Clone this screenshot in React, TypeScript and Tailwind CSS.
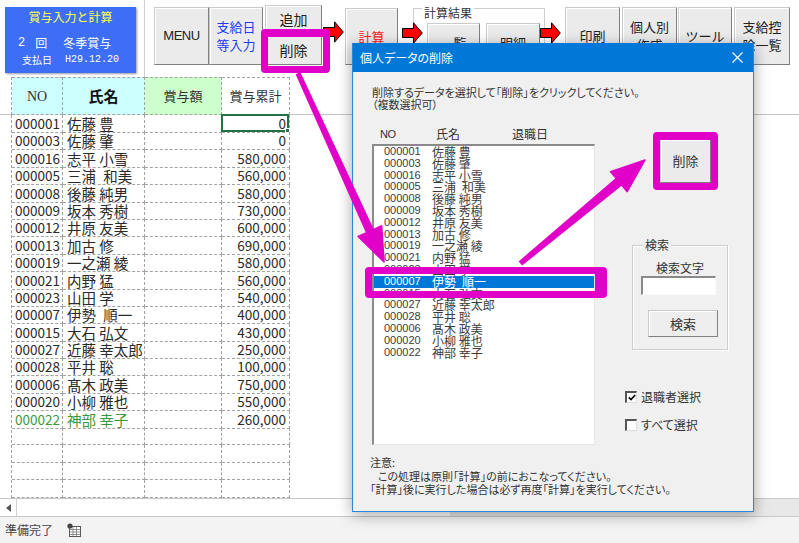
import React from 'react';

const rows: [string, string, string][] = [
  ['000001', '佐藤 豊', '0'],
  ['000003', '佐藤 肇', '0'],
  ['000016', '志平 小雪', '580,000'],
  ['000005', '三浦\u2002和美', '560,000'],
  ['000008', '後藤 純男', '580,000'],
  ['000009', '坂本 秀樹', '730,000'],
  ['000012', '井原 友美', '600,000'],
  ['000013', '加古 修', '690,000'],
  ['000019', '一之瀬 綾', '580,000'],
  ['000021', '内野 猛', '560,000'],
  ['000023', '山田 学', '540,000'],
  ['000007', '伊勢\u2002順一', '400,000'],
  ['000015', '大石 弘文', '430,000'],
  ['000027', '近藤 幸太郎', '250,000'],
  ['000028', '平井 聡', '100,000'],
  ['000006', '髙木 政美', '750,000'],
  ['000020', '小柳 雅也', '550,000'],
  ['000022', '神部 幸子', '260,000'],
];

const btn =
  'flex items-center justify-center text-center bg-[#ebebeb] border border-[#cacaca] border-r-[#808080] border-b-[#808080] shadow-[inset_1px_1px_0_#ffffff] text-[13px] leading-[18px]';

const cell = 'border-r border-b border-dashed border-[#a3a3a3]';

function RedArrow({ className }: { className: string }) {
  return (
    <svg className={`absolute ${className}`} width="21" height="22" viewBox="0 0 21 22">
      <path d="M0.5 6.5H11.5V0.8L20.3 11L11.5 21.2V15.5H0.5Z" fill="#ff0000" stroke="#000" strokeWidth="1" />
    </svg>
  );
}

function Toolbar() {
  return (
    <div className="flex h-[77px] shrink-0 items-start">
      {/* 賞与入力と計算 panel */}
      <div className="ml-[5px] mt-[7px] flex h-[66px] w-[131px] flex-col bg-[#3d6ef5] text-white shadow-[1px_1px_2px_rgba(0,0,0,0.4)]">
        <div className="mt-[2px] text-center text-[12px] leading-[16px] text-[#ffff4a]">賞与入力と計算</div>
        <div className="mt-[11px] flex text-[12px] leading-[14px]">
          <span className="ml-[13px] font-['Liberation_Mono',monospace]">2</span>
          <span className="ml-[10px]">回</span>
          <span className="ml-[16px]">冬季賞与</span>
        </div>
        <div className="mt-[3px] flex items-center leading-[14px]">
          <span className="ml-[17px] text-[10px]">支払日</span>
          <span className="ml-[13px] font-['Liberation_Mono',monospace] text-[10px]">H29.12.20</span>
        </div>
      </div>
      <div className="ml-[8px] h-[77px] w-px bg-[#d0d0d0]" />

      <div className={`${btn} ml-[9px] mt-[7px] h-[58px] w-[55px] font-['Liberation_Sans',sans-serif] text-[12px] tracking-[-0.5px]`}>MENU</div>
      <div className={`${btn} mt-[7px] h-[58px] w-[54px] text-[#1d3cf0]`}>
        支給日
        <br />
        等入力
      </div>
      <div className="ml-[2px] flex w-[57px] flex-col">
        <div className={`${btn} mt-[5px] h-[27px] text-[14px]`}>追加</div>
        <div className={`${btn} mt-[2px] h-[31px] text-[14px]`}>削除</div>
      </div>
      <div className={`${btn} ml-[23px] mt-[8px] h-[57px] w-[53px] text-[#ff1a1a]`}>計算</div>

      <div className="relative ml-[15px] mt-[8px] h-[64px] w-[132px] border border-[#cfcfcf]">
        <span className="absolute -top-[3px] left-[8px] bg-white px-[2px] text-[12px] leading-[14px] text-[#333]">計算結果</span>
        <div className="ml-[13px] mt-[14px] flex">
          <div className={`${btn} h-[40px] w-[53px]`}>一覧</div>
          <div className={`${btn} ml-[6px] h-[40px] w-[54px]`}>明細</div>
        </div>
      </div>

      <div className={`${btn} ml-[20px] mt-[7px] h-[58px] w-[55px]`}>印刷</div>
      <div className={`${btn} ml-[2px] mt-[7px] h-[58px] w-[55px]`}>
        個人別
        <br />
        作成
      </div>
      <div className={`${btn} ml-[1px] mt-[7px] h-[58px] w-[54px]`}>ツール</div>
      <div className={`${btn} ml-[2px] mt-[7px] h-[58px] w-[56px]`}>
        支給控
        <br />
        除一覧
      </div>
    </div>
  );
}

function Sheet() {
  const empty = Array.from({ length: 4 });
  return (
    <div className="flex h-[421px] shrink-0 flex-col overflow-hidden">
      <div className="flex h-[38px] shrink-0">
        <div className="w-[11px] border-b border-[#c6c6c6]" />
        <div className="grid grid-cols-[51px_82px_77px_68px] border-l border-dashed border-[#a3a3a3] text-[13px] text-[#333]">
          <div className="flex items-center justify-center border-r border-t border-b border-dashed border-[#a3a3a3] bg-[#ccffff] font-['Liberation_Serif',serif] text-[14px]">
            NO
          </div>
          <div className="flex items-center justify-center border-r border-t border-b border-dashed border-[#a3a3a3] bg-[#ccffff] text-[15px] font-bold text-[#111]">
            氏名
          </div>
          <div className="flex items-center justify-center border-r border-t border-b border-dashed border-[#a3a3a3] bg-[#ccffcc]">
            賞与額
          </div>
          <div className="flex items-center justify-center border-r border-t border-b border-dashed border-[#a3a3a3] bg-white">
            賞与累計
          </div>
        </div>
        <div className="flex-1 border-b border-[#c6c6c6]" />
      </div>

      <div className="ml-[11px] w-[279px] border-l border-dashed border-[#a3a3a3] text-[#2a2a2a]">
        {rows.map(([no, name, amount], i) => {
          const green = i === rows.length - 1;
          return (
            <div key={no} className="grid h-[17.4px] grid-cols-[51px_82px_77px_68px] leading-[17px]">
              <div className={`${cell} pl-[3px] text-[13.5px] ${green ? 'text-[#3a9a3a]' : ''}`}>{no}</div>
              <div className={`${cell} whitespace-pre pl-[4px] text-[14.5px] ${green ? 'text-[#3a9a3a]' : ''}`}>{name}</div>
              <div className={cell} />
              <div className={`${cell} relative pr-[3px] text-right text-[13.5px]`}>
                {amount}
                {i === 0 && (
                  <div className="absolute -left-px -top-px bottom-0 right-0 border-2 border-[#217346]">
                    <div className="absolute -bottom-[3px] -right-[3px] h-[5px] w-[5px] border border-white bg-[#217346]" />
                  </div>
                )}
              </div>
            </div>
          );
        })}
        {empty.map((_, i) => (
          <div key={i} className="grid h-[17.4px] grid-cols-[51px_82px_77px_68px]">
            <div className={cell} />
            <div className={cell} />
            <div className={cell} />
            <div className={cell} />
          </div>
        ))}
      </div>
    </div>
  );
}

function Dialog() {
  return (
    <div className="absolute left-[352px] top-[43px] flex h-[469px] w-[402px] flex-col border-x border-b border-[#2b86d8] bg-[#f0f0f0] text-[#333] shadow-[0_3px_14px_rgba(0,0,0,0.35)]">
      <div className="flex h-[29px] shrink-0 items-center justify-between bg-[#0078d7] pl-[7px] pr-[10px] text-[12px] text-white [font-feature-settings:'palt']">
        <span>個人データの削除</span>
        <svg width="11" height="11" viewBox="0 0 11 11">
          <path d="M0.5 0.5L10.5 10.5M10.5 0.5L0.5 10.5" stroke="#fff" strokeWidth="1.1" />
        </svg>
      </div>

      <div className="pl-[19px] pt-[14px] text-[11px] leading-[12px] [font-feature-settings:'palt']">
        <p>削除するデータを選択して「削除」をクリックしてください。</p>
        <p>（複数選択可）</p>
      </div>

      <div className="mt-[17px] flex">
        <div className="ml-[19px] flex flex-col">
          <div className="flex h-[14px] items-center pl-[8px] text-[12px] leading-[14px]">
            <span className="w-[56px] font-['Liberation_Sans',sans-serif] text-[11px] tracking-[-0.5px]">NO</span>
            <span className="w-[76px]">氏名</span>
            <span>退職日</span>
          </div>
          <div className="mt-[3px] h-[301px] w-[223px] overflow-hidden border-b border-l-2 border-r border-t-2 border-b-[#e6e6e6] border-l-[#8a8a8a] border-r-[#e6e6e6] border-t-[#8a8a8a] bg-white text-[#3c3c3c]">
            {rows.map(([no, name], i) => (
              <div
                key={no}
                className={`flex h-[11.8px] items-center leading-[11.8px] ${i === 11 ? 'bg-[#0078d7] text-white' : ''}`}
              >
                <span className="w-[58px] pl-[10px] font-['Liberation_Sans',sans-serif] text-[11px]">{no}</span>
                <span className="whitespace-pre text-[12px]">{name}</span>
              </div>
            ))}
          </div>
        </div>

        <div className="ml-[30px] flex flex-col">
          <div className={`${btn} ml-[35px] mt-[12px] h-[44px] w-[51px] bg-[#e5e5e5] text-[12px] text-[#333]`}>削除</div>

          <div className="relative ml-[7px] mt-[62px] flex h-[105px] w-[96px] flex-col border border-[#cdcdcd] shadow-[inset_1px_1px_0_#ffffff,1px_1px_0_#ffffff]">
            <span className="absolute -top-[8px] left-[10px] bg-[#f0f0f0] px-[2px] text-[12px] leading-[14px]">検索</span>
            <div className="mt-[15px] text-center text-[12px] leading-[14px]">検索文字</div>
            <div className="ml-[8px] mt-[1px] h-[19px] w-[75px] border-b border-l-2 border-r border-t-2 border-b-[#fafafa] border-l-[#8a8a8a] border-r-[#fafafa] border-t-[#8a8a8a] bg-white" />
            <div className={`${btn} ml-[15px] mt-[15px] h-[27px] w-[70px] bg-[#eeeeee] text-[12px] text-[#333]`}>検索</div>
          </div>

          <div className="mt-[41px] flex h-[12px] items-center text-[12px] leading-[14px]">
            <div className="flex h-[12px] w-[12px] items-center justify-center border-b border-l-2 border-r border-t-2 border-b-[#ddd] border-l-[#555] border-r-[#ddd] border-t-[#555] bg-white">
              <svg width="8" height="7" viewBox="0 0 8 7">
                <path d="M0.8 3.4L3 5.6L7.2 1" stroke="#000" strokeWidth="1.6" fill="none" />
              </svg>
            </div>
            <span className="ml-[4px]">退職者選択</span>
          </div>
          <div className="mt-[16px] flex h-[12px] items-center text-[12px] leading-[14px] [font-feature-settings:'palt']">
            <div className="h-[12px] w-[12px] border-b border-l-2 border-r border-t-2 border-b-[#ddd] border-l-[#555] border-r-[#ddd] border-t-[#555] bg-white" />
            <span className="ml-[4px]">すべて選択</span>
          </div>
        </div>
      </div>

      <div className="mt-[11px] pl-[17px] text-[11px] leading-[13.5px] [font-feature-settings:'palt']">
        <p>注意:</p>
        <p className="pl-[8px]">この処理は原則「計算」の前におこなってください。</p>
        <p>「計算」後に実行した場合は必ず再度「計算」を実行してください。</p>
      </div>
    </div>
  );
}

function Callouts() {
  const mag = '#e100c7';
  return (
    <>
      <div className="absolute left-[261px] top-[29px] h-[44px] w-[69px] rounded-[4px] border-[7px] border-t-[8px] border-[#e100c7]" />
      <div className="absolute left-[365px] top-[267px] h-[31px] w-[242px] rounded-[4px] border-[7px] border-r-[12px] border-[#e100c7]" />
      <div className="absolute left-[653px] top-[132px] h-[58px] w-[65px] rounded-[4px] border-[7px] border-t-[8px] border-[#e100c7]" />
      <svg className="pointer-events-none absolute left-0 top-0" width="799" height="543" viewBox="0 0 799 543">
        <path
          d="M296.6 74.6 L300.0 73.0 L373.1 229.6 L381.7 225.7 L384 262 L358.1 236.5 L366.7 232.6 Z"
          fill={mag}
          stroke={mag}
          strokeWidth="1.5"
          strokeLinejoin="round"
        />
        <path
          d="M522.3 264.5 L519.7 261.5 L616.3 178.6 L610.6 171.7 L645 160 L627.2 191.7 L621.5 184.8 Z"
          fill={mag}
          stroke={mag}
          strokeWidth="1.5"
          strokeLinejoin="round"
        />
      </svg>
    </>
  );
}

export default function App() {
  return (
    <div className="relative flex h-[543px] w-[799px] flex-col overflow-hidden bg-white font-['Noto_Sans_CJK_JP','Noto_Sans',sans-serif] text-[#222]">
      <Toolbar />
      <Sheet />

      {/* horizontal scroll bar */}
      <div className="flex h-[19px] shrink-0 border-y border-[#c8c8c8]">
        <div className="flex w-[17px] items-center justify-center border-r border-[#d4d4d4]">
          <svg width="5" height="8" viewBox="0 0 5 8">
            <path d="M5 0V8L0 4Z" fill="#555" />
          </svg>
        </div>
        <div className="w-[433px] bg-white" />
        <div className="flex-1 bg-[#e8e8e8]" />
      </div>

      {/* status bar */}
      <div className="flex h-[26px] shrink-0 items-center bg-[#f3f3f3] text-[12px] text-[#444]">
        <span className="ml-[5px]">準備完了</span>
        <svg className="ml-[14px]" width="14" height="14" viewBox="0 0 14 14">
          <rect x="2.5" y="3.5" width="11" height="10" fill="#fff" stroke="#555" />
          <path d="M2.5 6.5H13.5M2.5 9H13.5M2.5 11.5H13.5M6 3.5V13.5M9.5 3.5V13.5" stroke="#777" strokeWidth="0.8" />
          <circle cx="3" cy="3" r="2.6" fill="#444" />
        </svg>
      </div>

      <RedArrow className="left-[323px] top-[21px]" />
      <RedArrow className="left-[402px] top-[22px]" />
      <RedArrow className="left-[540px] top-[22px]" />

      <Dialog />
      <Callouts />
    </div>
  );
}
